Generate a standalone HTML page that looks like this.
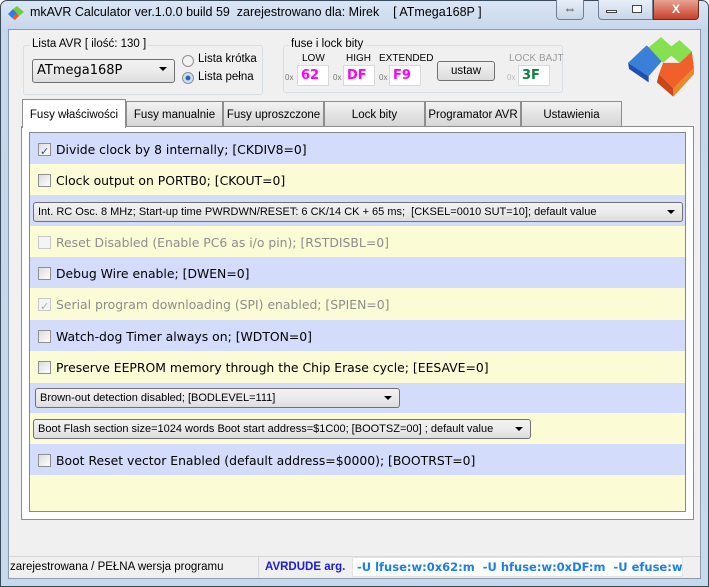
<!DOCTYPE html>
<html><head><meta charset="utf-8"><style>
*{margin:0;padding:0;box-sizing:border-box}
body{width:709px;height:587px;overflow:hidden;background:#fff;font-family:"Liberation Sans",sans-serif;font-size:12px;position:relative}
.a{position:absolute}
.win{left:0;top:0;width:709px;height:587px;border:1px solid #3b4b5e;border-radius:7px 7px 0 0;background:linear-gradient(#dbe6f4,#c6d6ea 30px,#c9d9ec)}
.client{left:8px;top:29px;width:693px;height:550px;background:#f0f0f0;border:1px solid #8a9bb0}
.grp{border:1px solid #d5dfe5;border-radius:3px}
.lbl{background:#f0f0f0;padding:0 2px;color:#000}
.tab{top:101px;height:25px;border:1px solid #8d8d8d;border-bottom:none;background:linear-gradient(#f3f3f3,#e3e3e3 50%,#d6d6d6);text-align:center;line-height:26px;font-size:11.5px}
.row{left:30px;width:655px;height:31px;font-family:"DejaVu Sans",sans-serif;font-size:12.4px;line-height:33px;padding-left:8px;white-space:nowrap}
.b{background:#d3dcfa}.y{background:#fbfbd6}
.cb{display:inline-block;width:13px;height:13px;border:1px solid #8e8f8f;background:linear-gradient(135deg,#dcdcdc,#fff);vertical-align:-2px;margin-right:5px;position:relative}
.cb.c::after{content:"✓";position:absolute;left:1px;top:-9px;font-size:11px;color:#2c4f9c}
.dis{color:#8d8d8d}.dis .cb{border-color:#c8c8c8;background:#f4f4f4}.dis .cb.c::after{color:#aaa}
.combo{height:20px;border:1px solid #707070;border-radius:3px;background:linear-gradient(#f2f2f2,#ebebeb 50%,#dddddd);font-size:11px;line-height:18px;padding-left:4px;white-space:nowrap;overflow:hidden;font-family:"Liberation Sans",sans-serif}
.combo::after{content:"";position:absolute;right:7px;top:7px;border:4px solid transparent;border-top:4px solid #000;border-bottom:0}
.hx{width:32px;height:21px;background:#fff;border:1px solid #d9d9d9;font-weight:bold;font-size:13px;line-height:20px;padding-left:3px;font-family:"DejaVu Sans",sans-serif}
.ox{font-size:8px;color:#777}
.sm{font-size:10px}
</style></head><body>
<div class="a win"></div>
<svg class="a" style="left:7px;top:6px" width="18" height="16" viewBox="0 0 18 16"><path d="M1 8 L6 3 L10 7 L5 12Z" fill="#2f7de0"/><path d="M6 3 L10 0 L17 6 L12 10 L10 7Z" fill="#6fcf3a"/><path d="M10 7 L12 10 L8 14 L5 12Z" fill="#f0552a"/></svg>
<div class="a" style="left:30px;top:5px;font-size:12.5px">mkAVR Calculator ver.1.0.0 build 59&nbsp; zarejestrowano dla: Mirek&nbsp;&nbsp;&nbsp; [ ATmega168P ]</div>
<div class="a" style="left:556px;top:0;width:28px;height:20px;border:1px solid #6d7e95;border-top:none;border-radius:0 0 4px 4px;background:linear-gradient(#e8eff8,#c8d6e8);text-align:center;font-size:13px;line-height:18px;color:#333">⇔</div>
<div class="a" style="left:598px;top:0;width:55px;height:20px;border:1px solid #6d7e95;border-top:none;border-radius:0 0 0 4px;background:linear-gradient(#e8eff8,#c8d6e8)"></div>
<div class="a" style="left:606px;top:10px;width:11px;height:3px;border:1px solid #444;background:#fff"></div>
<div class="a" style="left:632px;top:5px;width:10px;height:8px;border:1px solid #444;background:#fff"></div>
<div class="a" style="left:653px;top:0;width:46px;height:20px;border:1px solid #6d2e20;border-top:none;border-radius:0 0 4px 0;background:linear-gradient(#e8a393,#c8402a);color:#fff;font-weight:bold;text-align:center;line-height:18px;font-size:12px">X</div>
<div class="a client"></div>
<div class="a grp" style="left:23px;top:45px;width:240px;height:50px"></div>
<div class="a lbl" style="left:30px;top:38px;font-size:11.5px">Lista AVR [ ilość: 130 ]</div>
<div class="a combo" style="left:32px;top:59px;width:143px;height:24px;line-height:22px;padding-left:4px;font-family:'DejaVu Sans',sans-serif;font-size:13px">ATmega168P</div>
<div class="a" style="left:182px;top:55px;width:12px;height:12px;border-radius:50%;border:1px solid #8e8f8f;background:#f3f3f3"></div>
<div class="a" style="left:198px;top:53px;font-size:11.5px">Lista krótka</div>
<div class="a" style="left:182px;top:72px;width:12px;height:12px;border-radius:50%;border:1px solid #8e8f8f;background:radial-gradient(#2b64b8 30%,#cfe0f5 40%)"></div>
<div class="a" style="left:198px;top:71px;font-size:11.5px">Lista pełna</div>
<div class="a grp" style="left:283px;top:45px;width:280px;height:48px"></div>
<div class="a lbl" style="left:289px;top:38px;font-size:11.5px">fuse i lock bity</div>
<div class="a sm" style="left:302px;top:53px">LOW</div>
<div class="a sm" style="left:346px;top:53px">HIGH</div>
<div class="a sm" style="left:379px;top:53px">EXTENDED</div>
<div class="a sm" style="left:509px;top:53px;color:#999">LOCK BAJT</div>
<div class="a ox" style="left:285px;top:73px">0x</div><div class="a hx" style="left:297px;top:65px;color:#f0f">62</div>
<div class="a ox" style="left:333px;top:73px">0x</div><div class="a hx" style="left:343px;top:65px;color:#f0f">DF</div>
<div class="a ox" style="left:379px;top:73px">0x</div><div class="a hx" style="left:389px;top:65px;color:#f0f">F9</div>
<div class="a" style="left:437px;top:61px;width:58px;height:20px;background:linear-gradient(#f2f2f2,#dcdcdc);border:1px solid #707070;border-radius:3px;text-align:center;line-height:18px;font-size:11.5px">ustaw</div>
<div class="a ox" style="left:507px;top:73px;color:#bbb">0x</div><div class="a hx" style="left:518px;top:65px;color:#0a7f3f">3F</div>
<svg class="a" style="left:626px;top:36px" width="70" height="66" viewBox="0 0 68 62"><path d="M2 25 L20 8 L36 22 L22 38Z" fill="#3a7fd8"/><path d="M2 25 L22 38 L22 44 L3 31Z" fill="#1f4fb0"/><path d="M22 10 L34 0 L44 9 L52 3 L64 14 L52 25 L44 18 L36 25Z" fill="#86e050"/><path d="M36 25 L52 25 L64 14 L66 30 L46 50 L32 36Z" fill="#f0602a"/><path d="M32 36 L46 50 L46 58 L30 44Z" fill="#c8461a"/><path d="M46 50 L66 30 L66 36 L46 58Z" fill="#e88a2a"/></svg>
<div class="a" style="left:21px;top:126px;width:673px;height:394px;border:1px solid #8d8d8d;background:#fff"></div>
<div class="a tab" style="left:126px;width:97px">Fusy manualnie</div>
<div class="a tab" style="left:223px;width:101px">Fusy uproszczone</div>
<div class="a tab" style="left:324px;width:101px">Lock bity</div>
<div class="a tab" style="left:425px;width:96px">Programator AVR</div>
<div class="a tab" style="left:521px;width:101px">Ustawienia</div>
<div class="a" style="left:22px;top:99px;width:104px;height:29px;border:1px solid #8d8d8d;border-bottom:none;background:#fff;text-align:center;line-height:30px;font-size:11.5px">Fusy właściwości</div>
<div class="a" style="left:29px;top:132px;width:657px;height:380px;border:1px solid #828790;background:#fbfbd6"></div>
<div class="a row b" style="top:133px"><span class="cb c"></span>Divide clock by 8 internally; [CKDIV8=0]</div>
<div class="a row y" style="top:164px"><span class="cb"></span>Clock output on PORTB0; [CKOUT=0]</div>
<div class="a row b" style="top:195px"></div>
<div class="a combo" style="left:33px;top:202px;width:650px">Int. RC Osc. 8 MHz; Start-up time PWRDWN/RESET: 6 CK/14 CK + 65 ms;&nbsp; [CKSEL=0010 SUT=10]; default value</div>
<div class="a row y dis" style="top:226px"><span class="cb"></span>Reset Disabled (Enable PC6 as i/o pin); [RSTDISBL=0]</div>
<div class="a row b" style="top:257px"><span class="cb"></span>Debug Wire enable; [DWEN=0]</div>
<div class="a row y dis" style="top:288px"><span class="cb c"></span>Serial program downloading (SPI) enabled; [SPIEN=0]</div>
<div class="a row b" style="top:320px"><span class="cb"></span>Watch-dog Timer always on; [WDTON=0]</div>
<div class="a row y" style="top:351px"><span class="cb"></span>Preserve EEPROM memory through the Chip Erase cycle; [EESAVE=0]</div>
<div class="a row b" style="top:383px"></div>
<div class="a combo" style="left:35px;top:388px;width:365px">Brown-out detection disabled; [BODLEVEL=111]</div>
<div class="a row y" style="top:413px"></div>
<div class="a combo" style="left:33px;top:419px;width:498px">Boot Flash section size=1024 words Boot start address=$1C00; [BOOTSZ=00] ; default value</div>
<div class="a row b" style="top:444px"><span class="cb"></span>Boot Reset vector Enabled (default address=$0000); [BOOTRST=0]</div>
<div class="a" style="left:9px;top:556px;width:691px;height:22px;background:#f0f0f0;border-top:1px solid #d7d7d7"></div>
<div class="a" style="left:10px;top:561px;font-size:11.5px">zarejestrowana / PEŁNA wersja programu</div>
<div class="a" style="left:258px;top:557px;width:1px;height:20px;background:#d7d7d7"></div>
<div class="a" style="left:265px;top:561px;font-size:11.5px;font-weight:bold;color:#1a1ae0">AVRDUDE arg.</div>
<div class="a" style="left:352px;top:557px;width:331px;height:20px;background:#fff;border:1px solid #e3e3e3;overflow:hidden;white-space:nowrap;font-weight:bold;color:#1a7fe8;line-height:19px;padding-left:4px;font-family:'DejaVu Sans',sans-serif;font-size:11.5px">-U lfuse:w:0x62:m&nbsp; -U hfuse:w:0xDF:m&nbsp; -U efuse:w:0xF9:m</div>
</body></html>
